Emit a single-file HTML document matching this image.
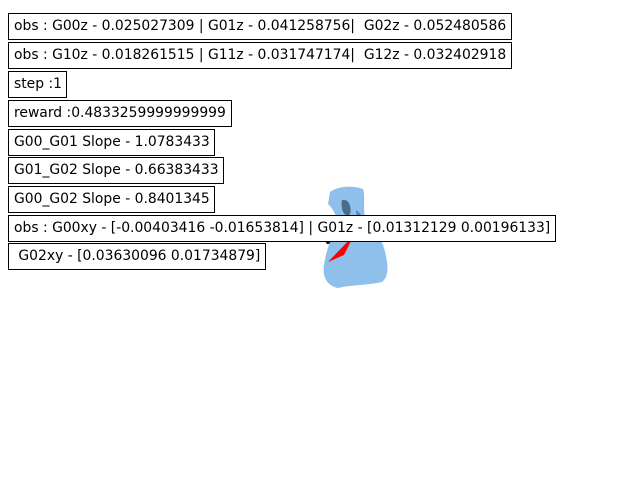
<!DOCTYPE html>
<html><head><style>
html,body{margin:0;padding:0;width:640px;height:480px;background:#fff;overflow:hidden;position:relative}
.b{position:absolute;left:8px;box-sizing:border-box;height:27px;border:1px solid #000;background:#fff;font-family:"DejaVu Sans","Liberation Sans",sans-serif;font-size:13.9px;line-height:25px;padding-left:5px;white-space:pre;color:#000;overflow:hidden}
svg{position:absolute;left:0;top:0}
</style></head><body>
<svg width="640" height="480">
<path d="M330 192 C338 186 352 185 363 189 C366 198 362 210 366 220 C372 228 380 235 384 248 C388 262 390 276 382 282 C370 285 350 285 338 288 C328 286 322 278 324 265 C326 252 330 240 336 230 C340 220 334 210 328 204 Z" fill="#8fc0ec"/>
<path d="M342 200 C348 198 352 206 350 214 C346 218 340 212 342 200 Z" fill="#4a6c88"/>
<path d="M356 210 C362 214 366 222 364 230 C360 226 356 218 356 210 Z" fill="#5a88b0"/>
<path d="M328 262 L354 235 L344 255 Z" fill="#ff0000"/>
<circle cx="328" cy="242" r="2.2" fill="#222"/>
</svg>
<div class="b" style="top:13px;width:504px">obs : G00z - 0.025027309 | G01z - 0.041258756|  G02z - 0.052480586</div>
<div class="b" style="top:42px;width:504px">obs : G10z - 0.018261515 | G11z - 0.031747174|  G12z - 0.032402918</div>
<div class="b" style="top:71px;width:59px">step :1</div>
<div class="b" style="top:100px;width:224px">reward :0.4833259999999999</div>
<div class="b" style="top:129px;width:207px">G00_G01 Slope - 1.0783433</div>
<div class="b" style="top:157px;width:216px">G01_G02 Slope - 0.66383433</div>
<div class="b" style="top:186px;width:207px">G00_G02 Slope - 0.8401345</div>
<div class="b" style="top:215px;width:548px">obs : G00xy - [-0.00403416 -0.01653814] | G01z - [0.01312129 0.00196133]</div>
<div class="b" style="top:243px;width:258px"> G02xy - [0.03630096 0.01734879]</div>
</body></html>
